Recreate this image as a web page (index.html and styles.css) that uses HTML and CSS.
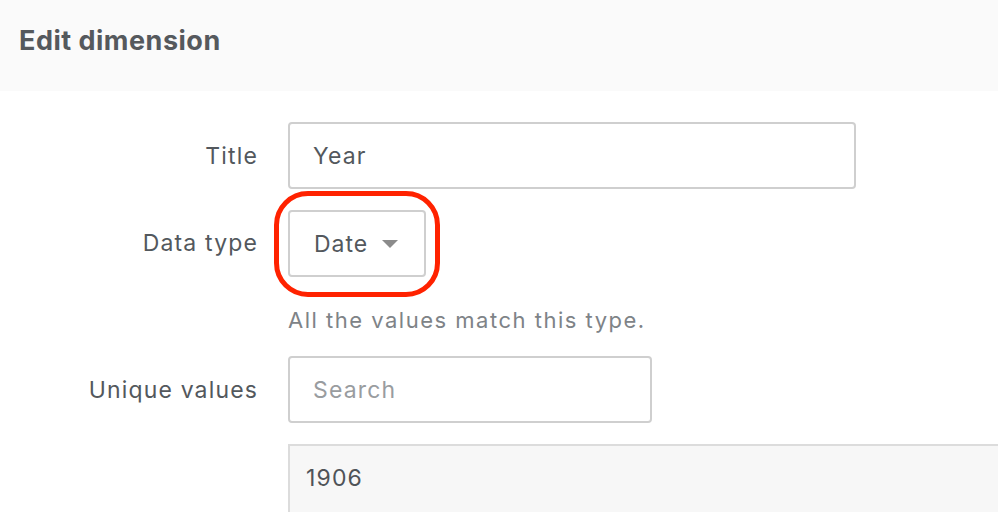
FILE: index.html
```html
<!DOCTYPE html>
<html lang="en">
<head>
<meta charset="utf-8">
<title>Edit dimension</title>
<link rel="stylesheet" href="styles.css">
</head>
<body>
<header class="header">
  <h1 class="header-title">Edit dimension</h1>
</header>
<main class="form">
  <div class="row">
    <label class="label" for="title">Title</label>
    <div class="field">
      <input class="input input-title" id="title" type="text" value="Year">
    </div>
  </div>
  <div class="row row-type">
    <label class="label label-type">Data type</label>
    <div class="field">
      <div class="select-wrap">
        <div class="select">
          <span class="select-value">Date</span>
          <svg class="caret" width="16" height="8" viewBox="0 0 16 8"><path d="M0 0 H16 L8 8 Z" fill="#8b8b8b"/></svg>
        </div>
        <span class="highlight"></span>
      </div>
      <p class="help">All the values match this type.</p>
    </div>
  </div>
  <div class="row">
    <label class="label" for="search">Unique values</label>
    <div class="field">
      <input class="input input-search" id="search" type="text" placeholder="Search">
    </div>
  </div>
  <div class="row">
    <span class="label"></span>
    <div class="list">
      <div class="list-item">1906</div>
    </div>
  </div>
</main>
</body>
</html>
```

FILE: styles.css
```css
* { box-sizing: border-box; }
html, body { margin: 0; padding: 0; }
body {
  background: #ffffff;
  font-family: Inter, "Open Sans", sans-serif;
  color: #53585d;
  overflow: hidden;
  width: 998px;
  height: 512px;
}
.header {
  height: 91px;
  background: #fafafa;
  padding: 24px 0 0 19px;
}
.header-title {
  margin: 0;
  font-size: 27px;
  line-height: 34px;
  font-weight: 700;
  color: #55595d;
  letter-spacing: 0.5px;
}
.form {
  padding-top: 31px;
  display: flex;
  flex-direction: column;
  gap: 21px;
  letter-spacing: 1.15px;
}
.row {
  display: grid;
  grid-template-columns: 257px 1fr;
  column-gap: 31px;
  align-items: center;
}
.row-type { align-items: start; }
.label {
  text-align: right;
  font-size: 23px;
  color: #53585d;
  margin-right: -1px;
}
.label-type {
  line-height: 67px;
}
.field { display: flex; flex-direction: column; align-items: flex-start; }
.input {
  height: 67px;
  border: 2px solid #cfcfcf;
  border-radius: 4px;
  padding: 0 0 0 23px;
  font-family: inherit;
  letter-spacing: inherit;
  font-size: 23px;
  color: #53585d;
  background: #fff;
  outline: none;
}
.input-title { width: 568px; }
.input-search { width: 364px; }
.input-search::placeholder { color: #999c9f; }
.select-wrap { position: relative; }
.select {
  width: 138px;
  height: 67px;
  border: 2px solid #cfcfcf;
  border-radius: 4px;
  padding: 0 0 0 24px;
  display: flex;
  align-items: center;
  gap: 14px;
  font-size: 23px;
  letter-spacing: 1px;
}
.caret { display: block; margin-top: 1px; }
.highlight {
  position: absolute;
  left: -14px;
  top: -19px;
  right: -14px;
  bottom: -20px;
  border: 5px solid #ff2200;
  border-radius: 34px;
  pointer-events: none;
}
.help {
  margin: 29px 0 1px;
  font-size: 22px;
  color: #7e8387;
  line-height: 28px;
  letter-spacing: 1.5px;
}
.list {
  border-top: 2px solid #dcdcdc;
  border-left: 2px solid #dcdcdc;
  background: #f7f7f7;
  height: 68px;
}
.list-item {
  padding: 18px 0 0 16px;
  font-size: 23px;
  color: #4f5358;
}
```
